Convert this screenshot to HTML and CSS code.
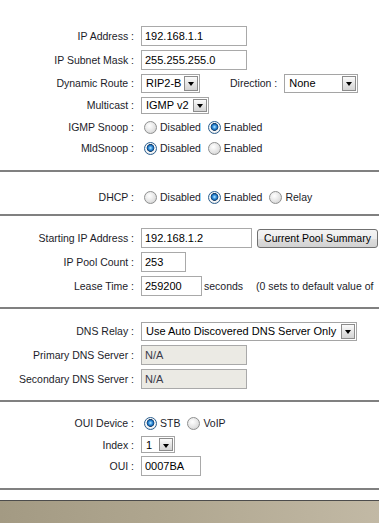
FILE: index.html
```html
<!DOCTYPE html>
<html lang="en">

<head>
    <meta charset="UTF-8">
    <title>LAN Setup</title>
    <meta name="viewport" content="width=device-width, initial-scale=1.0">
    <link rel="stylesheet" href="styles.css">
</head>

<body>

    <div class="section sec-lan">
        <div class="row">
            <span class="lbl">IP Address :</span>
            <input class="txt w-ip" type="text" value="192.168.1.1">
        </div>
        <div class="row">
            <span class="lbl">IP Subnet Mask :</span>
            <input class="txt w-ip" type="text" value="255.255.255.0">
        </div>
        <div class="row row-22">
            <span class="lbl">Dynamic Route :</span>
            <span class="select w-route"><span class="val">RIP2-B</span><span class="arrow"></span></span>
            <span class="lbl-inline">Direction :</span>
            <span class="select w-dir"><span class="val">None</span><span class="arrow"></span></span>
        </div>
        <div class="row row-22">
            <span class="lbl">Multicast :</span>
            <span class="select small w-mcast"><span class="val">IGMP v2</span><span class="arrow"></span></span>
        </div>
        <div class="row row-22">
            <span class="lbl">IGMP Snoop :</span>
            <label class="opt"><input type="radio" name="igmp">Disabled</label>
            <label class="opt"><input type="radio" name="igmp" checked>Enabled</label>
        </div>
        <div class="row row-20">
            <span class="lbl">MldSnoop :</span>
            <label class="opt"><input type="radio" name="mld" checked>Disabled</label>
            <label class="opt"><input type="radio" name="mld">Enabled</label>
        </div>
    </div>

    <div class="section sec-dhcp">
        <div class="row row-22">
            <span class="lbl">DHCP :</span>
            <label class="opt"><input type="radio" name="dhcp">Disabled</label>
            <label class="opt"><input type="radio" name="dhcp" checked>Enabled</label>
            <label class="opt"><input type="radio" name="dhcp">Relay</label>
        </div>
    </div>

    <div class="section sec-pool">
        <div class="row">
            <span class="lbl">Starting IP Address :</span>
            <input class="txt w-start" type="text" value="192.168.1.2">
            <button class="btn">Current Pool Summary</button>
        </div>
        <div class="row">
            <span class="lbl">IP Pool Count :</span>
            <input class="txt w-count" type="text" value="253">
        </div>
        <div class="row">
            <span class="lbl">Lease Time :</span>
            <input class="txt w-lease" type="text" value="259200">
            <span class="unit">seconds</span>
            <span class="note">(0 sets to default value of</span>
        </div>
    </div>

    <div class="section sec-dns">
        <div class="row">
            <span class="lbl">DNS Relay :</span>
            <span class="select w-dns"><span class="val">Use Auto Discovered DNS Server Only</span><span class="arrow"></span></span>
        </div>
        <div class="row">
            <span class="lbl">Primary DNS Server :</span>
            <input class="txt w-ip" type="text" value="N/A" disabled>
        </div>
        <div class="row">
            <span class="lbl">Secondary DNS Server :</span>
            <input class="txt w-ip" type="text" value="N/A" disabled>
        </div>
    </div>

    <div class="section sec-oui">
        <div class="row row-22">
            <span class="lbl">OUI Device :</span>
            <label class="opt"><input type="radio" name="oui" checked>STB</label>
            <label class="opt"><input type="radio" name="oui">VoIP</label>
        </div>
        <div class="row row-21">
            <span class="lbl">Index :</span>
            <span class="select small w-index"><span class="val">1</span><span class="arrow"></span></span>
        </div>
        <div class="row row-21">
            <span class="lbl">OUI :</span>
            <input class="txt w-oui" type="text" value="0007BA">
        </div>
    </div>

    <div class="taskbar"></div>

</body>

</html>
```

FILE: styles.css
```css
body {
    margin: 0;
    font-family: "Liberation Sans", Arial, sans-serif;
    font-size: 10.5px;
    color: #1c1c2a;
    background: #fff;
    overflow: hidden;
}

.section {
    border-bottom: 2px solid #808080;
    box-sizing: border-box;
}

.sec-lan {
    padding: 24px 0 12px;
}

.sec-dhcp {
    padding: 14px 0 6px;
}

.sec-pool,
.sec-dns {
    padding: 10px 0 9px;
}

.sec-oui {
    padding: 10px 0 12px;
}

.row {
    display: flex;
    align-items: center;
    height: 24px;
    white-space: nowrap;
}

.row-22 {
    height: 22px;
}

.row-21 {
    height: 21px;
}

.row-20 {
    height: 20px;
}

.lbl {
    flex: none;
    width: 141px;
    padding-right: 7px;
    box-sizing: border-box;
    text-align: right;
}

.lbl-inline {
    margin: 0 7px 0 30px;
}

/* text inputs */
.txt {
    height: 20px;
    margin: 0;
    padding: 0 3px;
    border: 1px solid #a9a9a9;
    box-sizing: border-box;
    font: inherit;
    font-size: 11px;
    color: #000;
    background: #fff;
}

.txt:disabled {
    background: #ebeae4;
    color: #3a3a4a;
}

.w-ip {
    width: 106px;
}

.w-start {
    width: 111px;
}

.w-count {
    width: 45px;
}

.w-lease {
    width: 61px;
}

.w-oui {
    width: 60px;
}

/* drop-down lists */
.select {
    display: inline-flex;
    align-items: center;
    justify-content: space-between;
    height: 19px;
    padding-left: 4px;
    border: 1px solid #a5a5a5;
    box-sizing: border-box;
    background: #fff;
    color: #000;
    font-size: 11px;
}

.select.small {
    height: 17px;
}

.arrow {
    position: relative;
    flex: none;
    width: 14px;
    height: 15px;
    margin-right: 1px;
    border: 1px solid #8c8c8c;
    box-sizing: border-box;
    background: linear-gradient(#fbfbfb, #e6e6e6 50%, #d4d4d4);
}

.select.small .arrow {
    height: 13px;
}

.arrow::after {
    content: "";
    position: absolute;
    left: 3px;
    top: 50%;
    margin-top: -1px;
    border-left: 3.5px solid transparent;
    border-right: 3.5px solid transparent;
    border-top: 4px solid #000;
}

.w-route {
    width: 59px;
}

.w-dir {
    width: 74px;
}

.w-mcast {
    width: 68px;
}

.w-dns {
    width: 216px;
}

.w-index {
    width: 34px;
}

/* radio buttons */
.opt {
    display: inline-flex;
    align-items: center;
    margin-right: 4px;
}

.opt input {
    appearance: none;
    width: 13px;
    height: 13px;
    margin: 0 3px 0 3px;
    border: 1px solid #8e8f8f;
    border-radius: 50%;
    box-sizing: border-box;
    background: radial-gradient(circle at 40% 35%, #ffffff, #e2e2e2 60%, #c8c8c8);
}

.opt input:checked {
    border-color: #2c5f8f;
    background:
        radial-gradient(circle at 50% 45%, #c8ecff 0, #4aa3e6 1.5px, #105da8 3px, #1b3f66 3.6px, #ffffff 4.2px, #e6e6e6 6px);
}

.unit {
    margin-left: 2px;
}

.note {
    margin-left: 13px;
}

.btn {
    width: 121px;
    height: 19px;
    margin-left: 5px;
    padding: 0;
    border: 1px solid #707070;
    border-radius: 3px;
    background: linear-gradient(#f4f4f4, #ececec 50%, #dfdfdf 50%, #d2d2d2);
    font: inherit;
    color: #000;
}

/* bottom strip */
.taskbar {
    margin-top: 10px;
    height: 23px;
    border-top: 1px solid #4c4c4c;
    background: linear-gradient(90deg, #a39a83, #b0a790 45%, #c2b9a5);
}
```
